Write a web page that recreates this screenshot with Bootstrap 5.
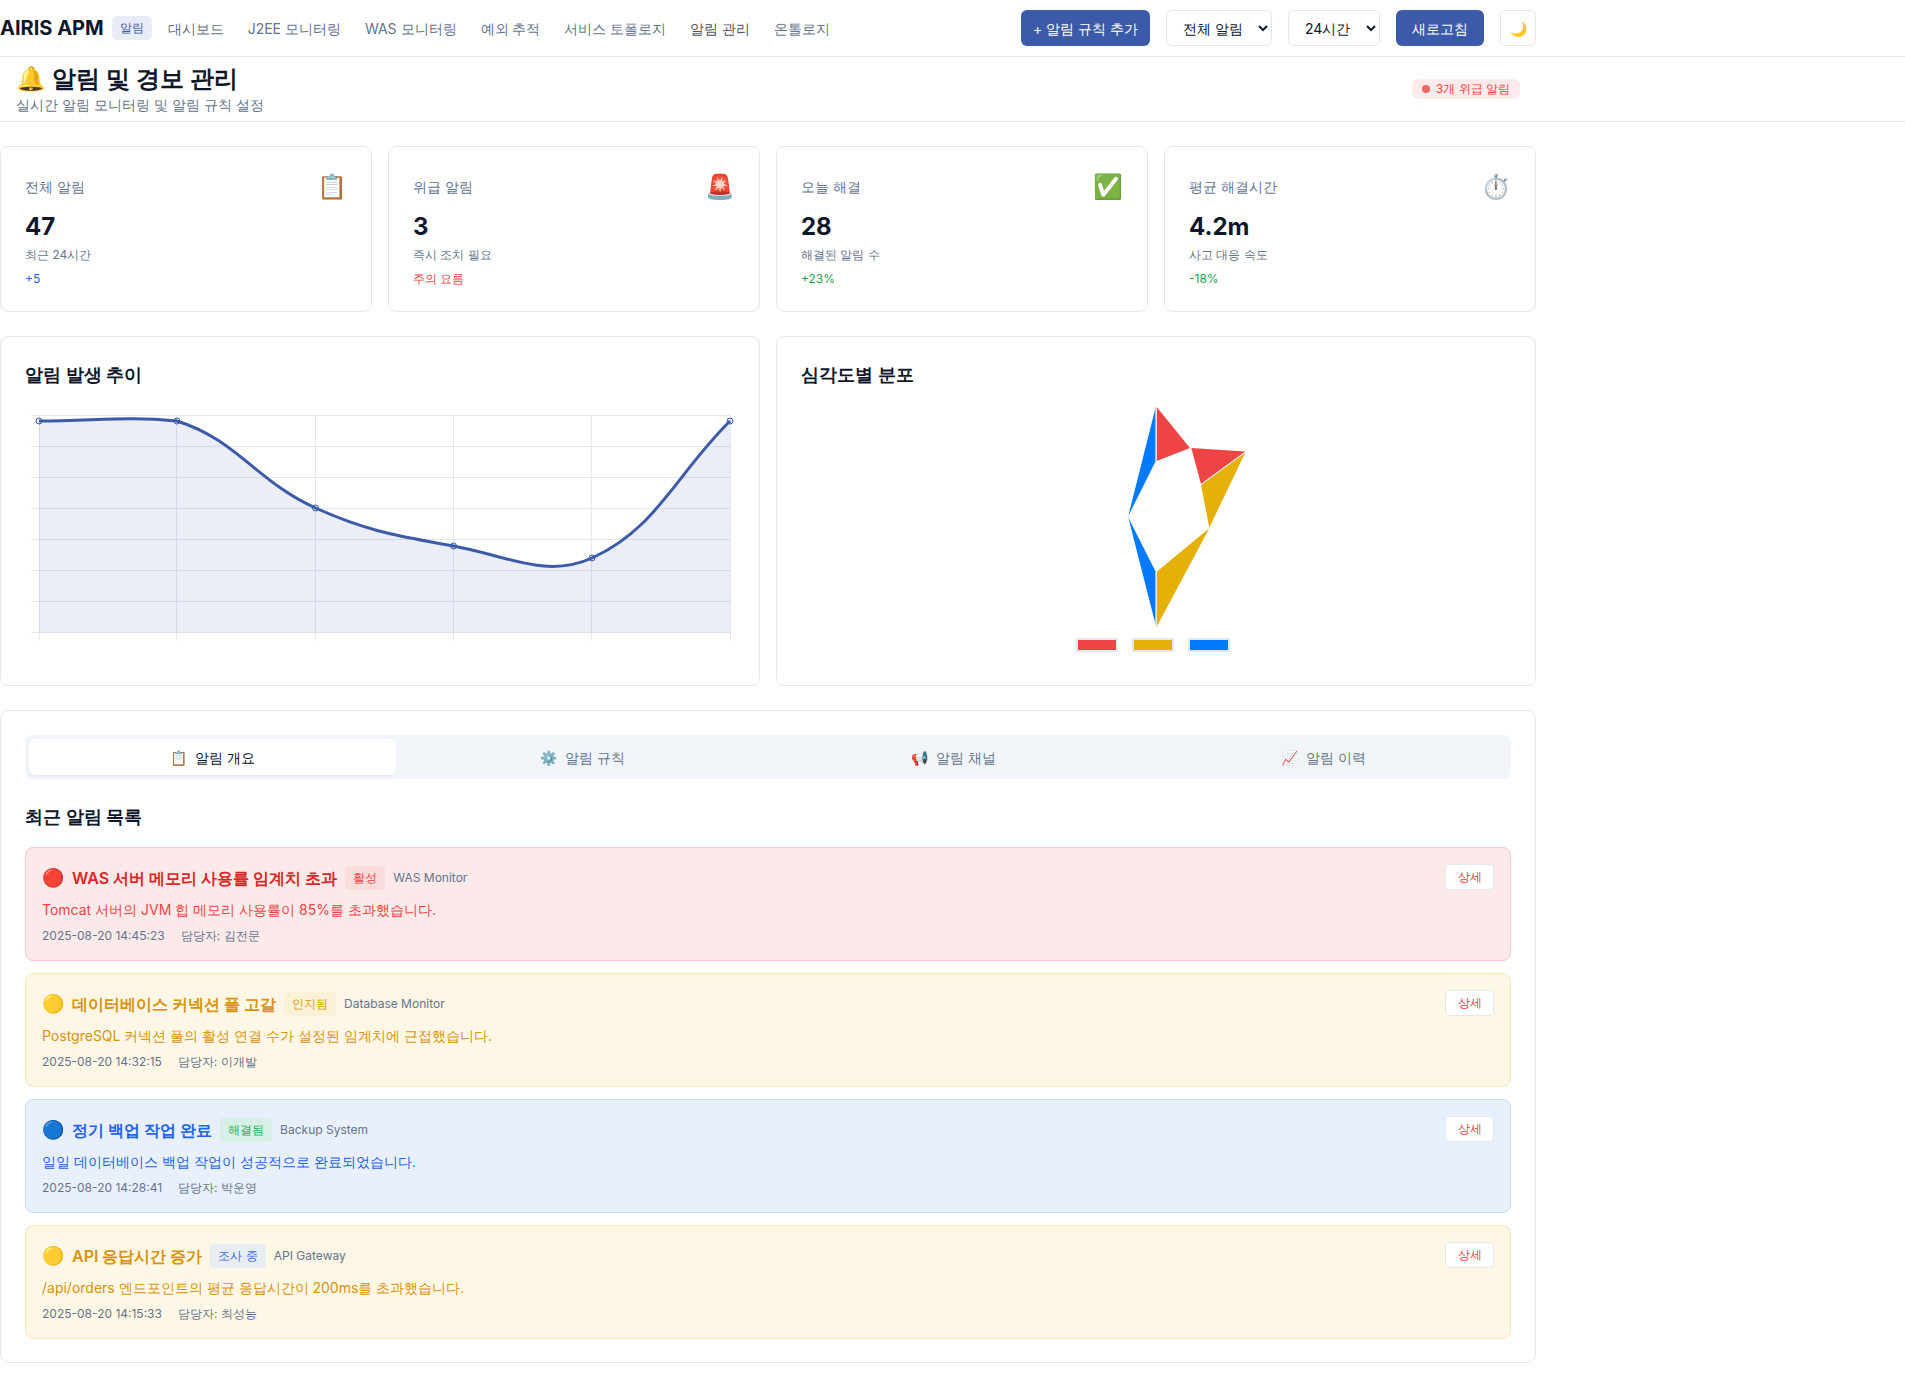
<!DOCTYPE html>
<html lang="ko">
<head>
  <meta charset="UTF-8">
  <title>AIRIS APM - 알림 관리</title>
  <link href="https://cdn.jsdelivr.net/npm/bootstrap@5.3.3/dist/css/bootstrap.min.css" rel="stylesheet">
  <style>
    body { font-family: Inter, sans-serif; background: #fff; color: #0f172a; }
    .app-wrap { width: 1536px; }
    .top-nav { height: 57px; border-bottom: 1px solid #e2e8f0; }
    .logo { font-size: 20px; font-weight: 700; color: #0f172a; line-height: 1; }
    .menu-pill { background: #e8ecf6; color: #3b5ba9; font-size: 12px; height: 24px; width: 40px; border-radius: 6px; }
    .menu-link { font-size: 14px; color: #64748b; text-decoration: none; }
    .menu-link.current { color: #475569; }
    .btn-main { background: #3b5ba9; color: #fff; font-size: 14px; height: 36px; border: 0; border-radius: 6px; padding: 0 12px; }
    .btn-main:hover { background: #3b5ba9; color: #fff; }
    .btn-wide { padding: 0 16px; }
    .sel-box { appearance: auto; height: 36px; font-size: 14px; color: #0f172a; border: 1px solid #e2e8f0; border-radius: 6px; background: #fff; padding: 0 12px; }
    .moon-btn { width: 36px; height: 36px; padding: 0; font-size: 14px; border: 1px solid #e2e8f0; border-radius: 6px; background: #fff; }
    .sub-head-line { border-bottom: 1px solid #e2e8f0; }
    .sub-head { height: 64px; padding: 0 16px; }
    .sub-head h1 { font-size: 24px; font-weight: 600; line-height: 32px; margin: 0; }
    .sub-head p { font-size: 14px; line-height: 20px; color: #64748b; margin: 0; }
    .crit-pill { background: #fdeaea; color: #ef4444; font-size: 12px; height: 20px; padding: 0 10px; border-radius: 6px; gap: 6px; }
    .crit-dot { width: 8px; height: 8px; background: #ef4444; opacity: .8; border-radius: 50%; }
    .panel { border: 1px solid #e2e8f0; border-radius: 8px; background: #fff; }
    .stat-panel { height: 166px; padding: 24px; }
    .stat-label { font-size: 14px; color: #64748b; line-height: 20px; }
    .stat-icon { font-size: 24px; line-height: 32px; }
    .stat-num { font-size: 24px; font-weight: 700; line-height: 32px; margin-top: 8px; }
    .stat-sub { font-size: 12px; color: #64748b; line-height: 16px; margin-top: 4px; }
    .stat-delta { font-size: 12px; line-height: 16px; margin-top: 8px; }
    .c-blue { color: #2563eb; }
    .c-red { color: #ef4444; }
    .c-green { color: #16a34a; }
    .chart-panel { height: 350px; padding: 24px; }
    .panel-title { font-size: 18px; font-weight: 600; line-height: 28px; margin: 0; }
    .chart-svg { display: block; margin-top: 16px; }
    .list-panel { height: 653px; padding: 24px; }
    .tab-bar { background: #f1f5f9; border-radius: 8px; padding: 4px; gap: 4px; height: 44px; }
    .tab-item { flex: 1 1 0; height: 36px; font-size: 14px; color: #64748b; border-radius: 6px; gap: 8px; }
    .tab-item.on { background: #fff; color: #0f172a; box-shadow: 0 1px 2px rgba(0,0,0,.05); }
    .list-title { font-size: 18px; font-weight: 600; line-height: 28px; margin: 24px 0 16px; }
    .alert-box { height: 114px; border: 1px solid; border-radius: 8px; padding: 16px; margin-bottom: 12px; }
    .a-crit { background: #fceaea; border-color: #f8caca; color: #ef4444; }
    .a-warn { background: #fef7e6; border-color: #fbe9b7; color: #d9930d; }
    .a-info { background: #e9f0fd; border-color: #c8d9f8; color: #2563eb; }
    .a-crit .a-title { color: #dc2626; }
    .a-warn .a-title { color: #d9930d; }
    .a-info .a-title { color: #2563eb; }
    .a-head { margin-top: 2px; }
    .a-emoji { font-size: 18px; line-height: 24px; }
    .a-title { font-size: 16px; font-weight: 600; line-height: 24px; }
    .state-tag { font-size: 12px; height: 24px; padding: 0 8px; border-radius: 4px; }
    .st-active { background: #fbdcdc; color: #ef4444; }
    .st-ack { background: #fbf1d6; color: #d9a106; }
    .st-done { background: #d7f0e7; color: #22b35e; }
    .st-look { background: #e8edf3; color: #3b6fe0; }
    .a-src { font-size: 12px; color: #64748b; }
    .a-msg { font-size: 14px; line-height: 20px; margin-top: 10px; }
    .a-meta { font-size: 12px; line-height: 16px; color: #64748b; margin-top: 8px; gap: 16px; }
    .detail-btn { font-size: 12px; height: 26px; width: 49px; padding: 0; line-height: 24px; background: #fff; color: #ef4444; border: 1px solid #e2e8f0; border-radius: 4px; }
  </style>
</head>
<body>
<div class="top-nav">
  <div class="app-wrap d-flex align-items-center justify-content-between h-100">
    <div class="d-flex align-items-center">
      <span class="logo me-2">AIRIS APM</span>
      <span class="menu-pill d-flex align-items-center justify-content-center me-3">알림</span>
      <nav class="d-flex gap-4">
        <a class="menu-link" href="#">대시보드</a>
        <a class="menu-link" href="#">J2EE 모니터링</a>
        <a class="menu-link" href="#">WAS 모니터링</a>
        <a class="menu-link" href="#">예외 추적</a>
        <a class="menu-link" href="#">서비스 토폴로지</a>
        <a class="menu-link current" href="#">알림 관리</a>
        <a class="menu-link" href="#">온톨로지</a>
      </nav>
    </div>
    <div class="d-flex align-items-center gap-3">
      <button class="btn btn-main">+ 알림 규칙 추가</button>
      <select class="sel-box"><option>전체 알림</option></select>
      <select class="sel-box"><option>24시간</option></select>
      <button class="btn btn-main btn-wide">새로고침</button>
      <button class="moon-btn">🌙</button>
    </div>
  </div>
</div>

<div class="sub-head-line">
  <div class="app-wrap sub-head d-flex align-items-center justify-content-between">
    <div>
      <h1>🔔 알림 및 경보 관리</h1>
      <p>실시간 알림 모니터링 및 알림 규칙 설정</p>
    </div>
    <span class="crit-pill d-flex align-items-center"><span class="crit-dot"></span>3개 위급 알림</span>
  </div>
</div>

<div class="app-wrap pt-4">
  <div class="row g-3 mb-4">
    <div class="col-3">
      <div class="panel stat-panel">
        <div class="d-flex justify-content-between align-items-center"><span class="stat-label">전체 알림</span><span class="stat-icon">📋</span></div>
        <div class="stat-num">47</div>
        <div class="stat-sub">최근 24시간</div>
        <div class="stat-delta c-blue">+5</div>
      </div>
    </div>
    <div class="col-3">
      <div class="panel stat-panel">
        <div class="d-flex justify-content-between align-items-center"><span class="stat-label">위급 알림</span><span class="stat-icon">🚨</span></div>
        <div class="stat-num">3</div>
        <div class="stat-sub">즉시 조치 필요</div>
        <div class="stat-delta c-red">주의 요름</div>
      </div>
    </div>
    <div class="col-3">
      <div class="panel stat-panel">
        <div class="d-flex justify-content-between align-items-center"><span class="stat-label">오늘 해결</span><span class="stat-icon">✅</span></div>
        <div class="stat-num">28</div>
        <div class="stat-sub">해결된 알림 수</div>
        <div class="stat-delta c-green">+23%</div>
      </div>
    </div>
    <div class="col-3">
      <div class="panel stat-panel">
        <div class="d-flex justify-content-between align-items-center"><span class="stat-label">평균 해결시간</span><span class="stat-icon">⏱️</span></div>
        <div class="stat-num">4.2m</div>
        <div class="stat-sub">사고 대응 속도</div>
        <div class="stat-delta c-green">-18%</div>
      </div>
    </div>
  </div>

  <div class="row g-3 mb-4">
    <div class="col-6">
      <div class="panel chart-panel">
        <h3 class="panel-title">알림 발생 추이</h3>
        <svg class="chart-svg" id="trendChart" width="710" height="250" viewBox="25 405 710 250"></svg>
      </div>
    </div>
    <div class="col-6">
      <div class="panel chart-panel">
        <h3 class="panel-title">심각도별 분포</h3>
        <svg class="chart-svg" width="710" height="250" viewBox="801 405 710 250">
          <polygon points="1155.7,407 1155.7,461 1128.3,516" fill="#007bff"/>
          <polygon points="1156.7,407 1190,448 1156.7,461" fill="#ef4444"/>
          <polygon points="1191.3,448 1245.3,451.5 1201,484" fill="#ef4444"/>
          <polygon points="1201,485 1245.3,452.5 1209.3,527.7" fill="#e5b007"/>
          <polygon points="1209.3,528.3 1156.7,571.7 1156.7,626.7" fill="#e5b007"/>
          <polygon points="1128.3,517.5 1155.7,571.7 1155.7,625" fill="#007bff"/>
          <line x1="1156" y1="406" x2="1156" y2="461" stroke="#e2e8f0"/>
          <line x1="1156" y1="572" x2="1156" y2="628" stroke="#e2e8f0"/>
          <line x1="1201" y1="484.5" x2="1245.5" y2="452" stroke="#e2e8f0"/>
          <rect x="1077" y="639" width="40" height="12" fill="#ef4444" stroke="#e2e8f0" stroke-width="2"/>
          <rect x="1133" y="639" width="40" height="12" fill="#e5b007" stroke="#e2e8f0" stroke-width="2"/>
          <rect x="1189" y="639" width="40" height="12" fill="#007bff" stroke="#e2e8f0" stroke-width="2"/>
        </svg>
      </div>
    </div>
  </div>

  <div class="panel list-panel">
    <div class="tab-bar d-flex">
      <div class="tab-item on d-flex align-items-center justify-content-center">📋 <span>알림 개요</span></div>
      <div class="tab-item d-flex align-items-center justify-content-center">⚙️ <span>알림 규칙</span></div>
      <div class="tab-item d-flex align-items-center justify-content-center">📢 <span>알림 채널</span></div>
      <div class="tab-item d-flex align-items-center justify-content-center">📈 <span>알림 이력</span></div>
    </div>
    <h3 class="list-title">최근 알림 목록</h3>

    <div class="alert-box a-crit d-flex justify-content-between align-items-start">
      <div>
        <div class="a-head d-flex align-items-center gap-2"><span class="a-emoji">🔴</span><span class="a-title">WAS 서버 메모리 사용률 임계치 초과</span><span class="state-tag st-active d-flex align-items-center">활성</span><span class="a-src">WAS Monitor</span></div>
        <div class="a-msg">Tomcat 서버의 JVM 힙 메모리 사용률이 85%를 초과했습니다.</div>
        <div class="a-meta d-flex"><span>2025-08-20 14:45:23</span><span>담당자: 김전문</span></div>
      </div>
      <button class="detail-btn">상세</button>
    </div>

    <div class="alert-box a-warn d-flex justify-content-between align-items-start">
      <div>
        <div class="a-head d-flex align-items-center gap-2"><span class="a-emoji">🟡</span><span class="a-title">데이터베이스 커넥션 풀 고갈</span><span class="state-tag st-ack d-flex align-items-center">인지됨</span><span class="a-src">Database Monitor</span></div>
        <div class="a-msg">PostgreSQL 커넥션 풀의 활성 연결 수가 설정된 임계치에 근접했습니다.</div>
        <div class="a-meta d-flex"><span>2025-08-20 14:32:15</span><span>담당자: 이개발</span></div>
      </div>
      <button class="detail-btn">상세</button>
    </div>

    <div class="alert-box a-info d-flex justify-content-between align-items-start">
      <div>
        <div class="a-head d-flex align-items-center gap-2"><span class="a-emoji">🔵</span><span class="a-title">정기 백업 작업 완료</span><span class="state-tag st-done d-flex align-items-center">해결됨</span><span class="a-src">Backup System</span></div>
        <div class="a-msg">일일 데이터베이스 백업 작업이 성공적으로 완료되었습니다.</div>
        <div class="a-meta d-flex"><span>2025-08-20 14:28:41</span><span>담당자: 박운영</span></div>
      </div>
      <button class="detail-btn">상세</button>
    </div>

    <div class="alert-box a-warn d-flex justify-content-between align-items-start mb-0">
      <div>
        <div class="a-head d-flex align-items-center gap-2"><span class="a-emoji">🟡</span><span class="a-title">API 응답시간 증가</span><span class="state-tag st-look d-flex align-items-center">조사 중</span><span class="a-src">API Gateway</span></div>
        <div class="a-msg">/api/orders 엔드포인트의 평균 응답시간이 200ms를 초과했습니다.</div>
        <div class="a-meta d-flex"><span>2025-08-20 14:15:33</span><span>담당자: 최성능</span></div>
      </div>
      <button class="detail-btn">상세</button>
    </div>
  </div>
</div>

<script>
  // 추이 차트: 격자, 곡선, 점
  const pts = [[39,421],[177,421],[315.5,508],[453.5,546],[592,558],[730,421]];
  const gridX = [39,176,315,453,591,730];
  const gridY = [415.5,446.5,477.5,508.5,539.5,570.5,601.5,632.5];
  const areaTop = 416;
  const t = 0.4;

  function controls(p, c, n) {
    const d1 = Math.hypot(c[0]-p[0], c[1]-p[1]);
    const d2 = Math.hypot(n[0]-c[0], n[1]-c[1]);
    const fa = t * d1 / (d1 + d2 || 1);
    const fb = t * d2 / (d1 + d2 || 1);
    // 차트 영역 위로 넘어가지 않게 제어점 제한
    return [[c[0]-fa*(n[0]-p[0]), Math.max(areaTop, c[1]-fa*(n[1]-p[1]))], [c[0]+fb*(n[0]-p[0]), Math.max(areaTop, c[1]+fb*(n[1]-p[1]))]];
  }

  const cps = pts.map((c, i) => controls(pts[i-1] || c, c, pts[i+1] || c));
  let line = `M${pts[0][0]} ${pts[0][1]}`;
  for (let i = 1; i < pts.length; i++) {
    line += ` C${cps[i-1][1].join(' ')} ${cps[i][0].join(' ')} ${pts[i].join(' ')}`;
  }

  let html = '';
  gridY.forEach(y => { html += `<line x1="31" x2="730" y1="${y}" y2="${y}" stroke="#e2e8f0"/>`; });
  gridX.forEach(x => { html += `<line x1="${x}.5" x2="${x}.5" y1="416" y2="641" stroke="#e2e8f0"/>`; });
  html += `<path d="${line} L730 632.5 L39 632.5 Z" fill="rgba(59,91,169,.1)"/>`;
  html += `<path d="${line}" fill="none" stroke="#3b5ba9" stroke-width="3"/>`;
  pts.forEach(p => { html += `<circle cx="${p[0]}" cy="${p[1]}" r="3" fill="rgba(59,91,169,.1)" stroke="#3b5ba9"/>`; });
  document.getElementById('trendChart').innerHTML = html;
</script>
<script src="https://cdn.jsdelivr.net/npm/bootstrap@5.3.3/dist/js/bootstrap.bundle.min.js"></script>
</body>
</html>
